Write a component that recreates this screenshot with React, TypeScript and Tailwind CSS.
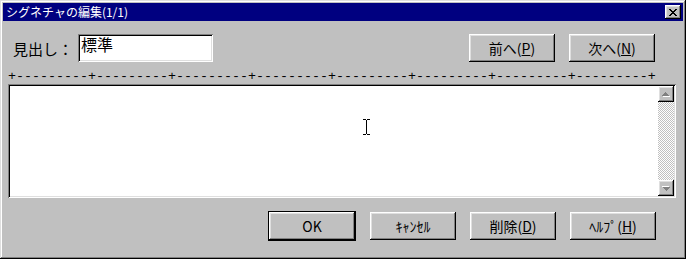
const raised =
  "shadow-[inset_-1px_-1px_#000,inset_1px_1px_#fff,inset_-2px_-2px_#808080,inset_2px_2px_#dfdfdf]"
const sunken =
  "shadow-[inset_1px_1px_#808080,inset_-1px_-1px_#fff,inset_2px_2px_#000,inset_-2px_-2px_#dfdfdf]"

const jp = "font-['Noto_Sans_CJK_JP','Noto_Sans',sans-serif]"

// Win95 close glyph, drawn pixel by pixel
const CloseGlyph = () => (
  <svg width="8" height="7" viewBox="0 0 8 7" shapeRendering="crispEdges">
    <path d="M0 0h2v1h-2zM6 0h2v1h-2zM1 1h2v1h-2zM5 1h2v1h-2zM2 2h4v1h-4zM3 3h2v1h-2zM2 4h4v1h-4zM1 5h2v1h-2zM5 5h2v1h-2zM0 6h2v1h-2zM6 6h2v1h-2z" fill="#000" />
  </svg>
)

const Arrow = ({ down }: { down?: boolean }) => (
  <svg width="8" height="5" viewBox="0 0 8 5" shapeRendering="crispEdges" className={down ? "rotate-180" : ""}>
    <path d="M4 1h1v1h-1zM3 2h3v1h-3zM2 3h5v1h-5zM1 4h7v1h-7z" fill="#fff" />
    <path d="M3 0h1v1h-1zM2 1h3v1h-3zM1 2h5v1h-5zM0 3h7v1h-7z" fill="#808080" />
  </svg>
)

const Btn = ({ children, isDefault }: { children: React.ReactNode; isDefault?: boolean }) => (
  <div
    className={
      isDefault
        ? "w-[88px] h-[30px] border border-black flex"
        : "w-[86px] h-[28px] flex"
    }
  >
    <div className={`flex-1 flex items-center justify-center bg-[#c0c0c0] text-[14px] leading-none text-black ${raised}`}>
      {children}
    </div>
  </div>
)

export default function App() {
  const ruler = "+---------".repeat(8) + "+"
  return (
    <div className={`w-[686px] h-[259px] bg-[#c0c0c0] p-[3px] flex flex-col ${jp} shadow-[inset_-1px_-1px_#000,inset_1px_1px_#dfdfdf,inset_-2px_-2px_#808080,inset_2px_2px_#fff]`}>
      {/* TITLE */}
      <div className="h-[18px] bg-[#000080] flex items-center pl-[3px] pr-[2px]">
        <span className="text-white text-[12px] leading-none">シグネチャの編集(1/1)</span>
        <div className={`ml-auto w-[16px] h-[14px] bg-[#c0c0c0] flex items-center justify-center ${raised}`}>
          <CloseGlyph />
        </div>
      </div>

      {/* HEADING ROW */}
      <div className="flex items-center mt-[13px] pl-[10px] pr-[28px]">
        <span className="w-[65px] text-[15px] leading-none text-black">見出し：</span>
        <div className={`w-[135px] h-[28px] bg-white pl-[3px] pt-[2px] text-[16px] leading-[17px] text-black ${sunken}`}>
          標準
        </div>
        <div className="ml-auto flex gap-[14px]">
          <Btn>前へ(<u>P</u>)</Btn>
          <Btn>次へ(<u>N</u>)</Btn>
        </div>
      </div>

      {/* RULER */}
      <div className="mt-[8px] h-[14px] pl-[5px] font-['Liberation_Mono',monospace] text-[13.3333px] leading-[14px] text-black whitespace-pre">
        {ruler}
      </div>

      {/* TEXT AREA */}
      <div className="ml-[5px] w-[668px] h-[114px] p-[2px] flex bg-white shadow-[inset_1px_1px_#808080,inset_-1px_-1px_#fff,inset_2px_2px_#000,inset_-2px_-2px_#dfdfdf]">
        <div className="flex-1 relative">
          <svg width="7" height="16" viewBox="0 0 7 16" shapeRendering="crispEdges" className="absolute left-[353px] top-[33px]">
            <path d="M0 0h3v1h-3zM4 0h3v1h-3zM3 1h1v14h-1zM0 15h3v1h-3zM4 15h3v1h-3z" fill="#000" />
          </svg>
        </div>
        <div className="w-[16px] flex flex-col">
          <div className={`h-[16px] bg-[#c0c0c0] flex items-center justify-center ${raised}`}>
            <Arrow />
          </div>
          <div className="flex-1 bg-[conic-gradient(#fff_25%,#c0c0c0_0_50%,#fff_0_75%,#c0c0c0_0)] bg-[length:2px_2px]" />
          <div className={`h-[16px] bg-[#c0c0c0] flex items-center justify-center ${raised}`}>
            <Arrow down />
          </div>
        </div>
      </div>

      {/* BOTTOM BUTTONS */}
      <div className="mt-[13px] flex items-center justify-end gap-[14px] pr-[27px]">
        <Btn isDefault>OK</Btn>
        <Btn>ｷｬﾝｾﾙ</Btn>
        <Btn>削除(<u>D</u>)</Btn>
        <Btn>ﾍﾙﾌﾟ(<u>H</u>)</Btn>
      </div>
    </div>
  )
}
